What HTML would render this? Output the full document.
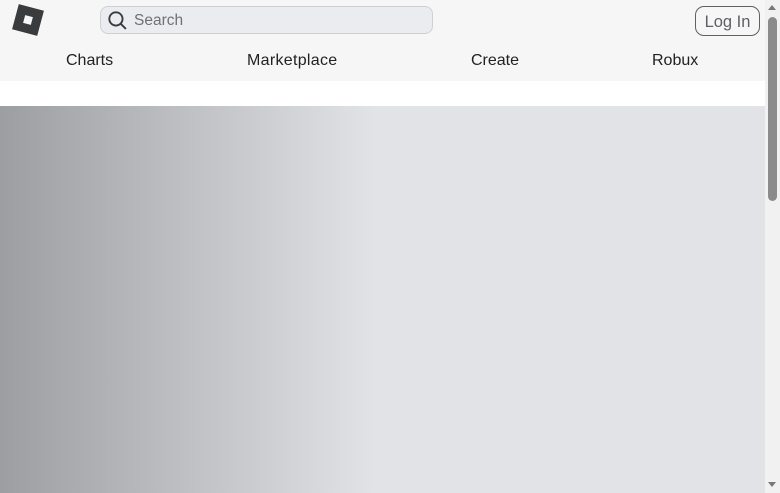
<!DOCTYPE html>
<html><head><style>
*{margin:0;padding:0;box-sizing:border-box}
body{width:780px;height:493px;overflow:hidden;background:#fff;font-family:"Liberation Sans",sans-serif;position:relative}
.top{position:absolute;left:0;top:0;width:765px;height:81px;background:#f6f6f6}
.logo{position:absolute;left:15px;top:7px;width:26px;height:26px;background:#393b3d;transform:rotate(15deg)}
.logo i{position:absolute;left:9px;top:9px;width:8px;height:8px;background:#f6f6f6}
.search{position:absolute;left:100px;top:6px;width:333px;height:28px;border:1px solid #cfd0d4;border-radius:8px;background:#ebecef}
.search span{position:absolute;left:33px;top:5px;font-size:15.5px;color:#6f7175}
.login{position:absolute;left:695px;top:6px;width:65px;height:30px;border:1px solid #5e6066;border-radius:9px;font-size:16.5px;color:#5e6066;text-align:center;line-height:30px}
.nav{position:absolute;top:52px;font-size:16px;color:#222}
.main{position:absolute;left:0;top:106px;width:765px;height:387px;background:linear-gradient(90deg,#9d9ea2 0%,#b2b3b7 15%,#cbccd0 33%,#e2e3e7 49%,#e2e3e7 100%)}
.sb{position:absolute;left:765px;top:0;width:15px;height:493px;background:#f1f1f1}
.thumb{position:absolute;left:768px;top:17px;width:9px;height:184px;background:#8b8b8b;border-radius:5px}
</style></head><body>
<div class="top">
<div class="logo"><i></i></div>
<div class="search"><svg style="position:absolute;left:6px;top:3px" width="21" height="21" viewBox="0 0 20 20"><circle cx="8.5" cy="8.5" r="6.3" fill="none" stroke="#393b3d" stroke-width="1.8"/><path d="M13 13l5 5" stroke="#393b3d" stroke-width="1.8"/></svg><span>Search</span></div>
<div class="login">Log In</div>
<div class="nav" style="left:66px">Charts</div>
<div class="nav" style="left:247px;letter-spacing:0.3px">Marketplace</div>
<div class="nav" style="left:471px">Create</div>
<div class="nav" style="left:652px">Robux</div>
</div>
<div class="main"></div>
<div class="sb"></div>
<div class="thumb"></div>
<div style="position:absolute;left:768px;top:5px;width:0;height:0;border-left:4px solid transparent;border-right:4px solid transparent;border-bottom:5px solid #777"></div>
<div style="position:absolute;left:768px;top:482px;width:0;height:0;border-left:4px solid transparent;border-right:4px solid transparent;border-top:5px solid #777"></div>
</body></html>
